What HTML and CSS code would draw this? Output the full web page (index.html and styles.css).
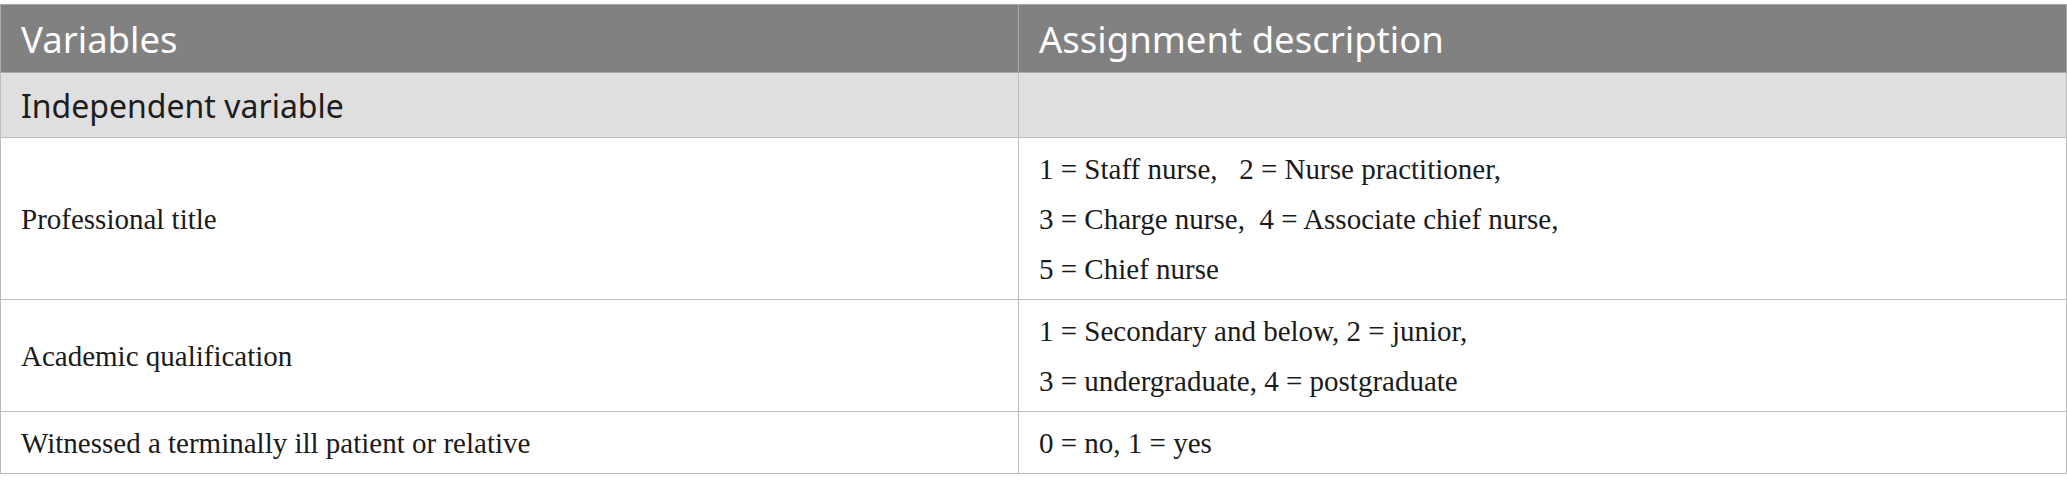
FILE: index.html
```html
<!DOCTYPE html>
<html lang="en">
<head>
<meta charset="utf-8">
<title>Variables</title>
<link rel="stylesheet" href="styles.css">
</head>
<body>
<table class="vars">
  <colgroup>
    <col class="col-var">
    <col class="col-desc">
  </colgroup>
  <thead>
    <tr class="head-row">
      <th>Variables</th>
      <th>Assignment description</th>
    </tr>
  </thead>
  <tbody>
    <tr class="section-row">
      <td>Independent variable</td>
      <td></td>
    </tr>
    <tr class="data-row">
      <td>Professional title</td>
      <td>
        <div class="line">1 = Staff nurse,&nbsp;&nbsp;&nbsp;2 = Nurse practitioner,</div>
        <div class="line">3 = Charge nurse,&nbsp; 4 = Associate chief nurse,</div>
        <div class="line">5 = Chief nurse</div>
      </td>
    </tr>
    <tr class="data-row">
      <td>Academic qualification</td>
      <td>
        <div class="line">1 = Secondary and below, 2 = junior,</div>
        <div class="line">3 = undergraduate, 4 = postgraduate</div>
      </td>
    </tr>
    <tr class="data-row">
      <td>Witnessed a terminally ill patient or relative</td>
      <td>
        <div class="line">0 = no, 1 = yes</div>
      </td>
    </tr>
  </tbody>
</table>
</body>
</html>
```

FILE: styles.css
```css
html, body {
  margin: 0;
  padding: 0;
  background: #ffffff;
}

body {
  padding-top: 4px;
}

.vars {
  width: 2067px;
  border-collapse: collapse;
  table-layout: fixed;
}

.col-var {
  width: 1018px;
}

.vars th,
.vars td {
  border: 1px solid #bdbdbd;
  text-align: left;
  vertical-align: middle;
  padding: 0 20px;
}

.head-row th {
  background: #808180;
  color: #ffffff;
  font-family: "Noto Sans", "Open Sans", sans-serif;
  font-weight: 400;
  font-size: 36.5px;
  height: 68px;
  box-sizing: border-box;
  border-color: #a9a9a9;
}

.section-row td {
  background: #e0dfe0;
  color: #1d1d1d;
  font-family: "Noto Sans", "Open Sans", sans-serif;
  font-size: 32px;
  height: 65px;
  box-sizing: border-box;
}

.data-row td {
  font-family: "Liberation Serif", "Times New Roman", serif;
  font-size: 29px;
  color: #1a1a1a;
  padding-top: 6px;
  padding-bottom: 5px;
}

.line {
  line-height: 50px;
}
```
